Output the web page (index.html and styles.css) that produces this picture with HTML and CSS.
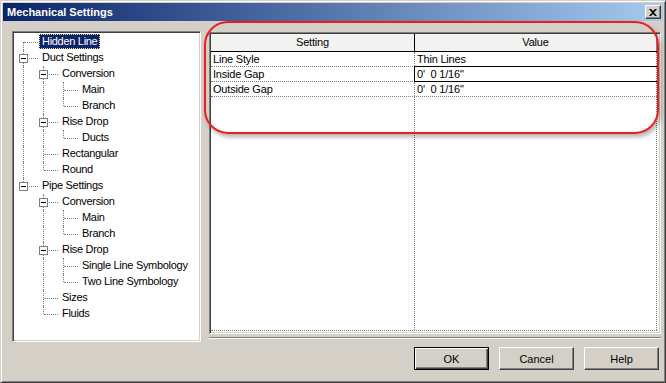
FILE: index.html
```html
<!DOCTYPE html>
<html lang="en">
<head>
    <meta charset="UTF-8">
    <meta name="viewport" content="width=device-width, initial-scale=1.0">
    <title>Mechanical Settings</title>
    <link rel="stylesheet" href="styles.css">
</head>
<body>
    <div class="dialog">
        <div class="titlebar">
            <span class="title">Mechanical Settings</span>
            <span class="close-btn">
                <svg width="8" height="7" viewBox="0 0 8 7"><path d="M0 0h2l2 2 2-2h2L5 3.5 8 7H6L4 5 2 7H0l3-3.5z" fill="#000"/></svg>
            </span>
        </div>

        <div class="main">
            <!-- tree on the left -->
            <div class="tree">
                <div class="row"><span class="conn f"></span><span class="label selected">Hidden Line</span></div>
                <div class="row"><span class="conn t"><i class="box"></i></span><span class="label">Duct Settings</span></div>
                <div class="row"><span class="guide on"></span><span class="conn t"><i class="box"></i></span><span class="label">Conversion</span></div>
                <div class="row"><span class="guide on"></span><span class="guide on"></span><span class="conn t"></span><span class="label">Main</span></div>
                <div class="row"><span class="guide on"></span><span class="guide on"></span><span class="conn l"></span><span class="label">Branch</span></div>
                <div class="row"><span class="guide on"></span><span class="conn t"><i class="box"></i></span><span class="label">Rise Drop</span></div>
                <div class="row"><span class="guide on"></span><span class="guide on"></span><span class="conn l"></span><span class="label">Ducts</span></div>
                <div class="row"><span class="guide on"></span><span class="conn t"></span><span class="label">Rectangular</span></div>
                <div class="row"><span class="guide on"></span><span class="conn l"></span><span class="label">Round</span></div>
                <div class="row"><span class="conn l"><i class="box"></i></span><span class="label">Pipe Settings</span></div>
                <div class="row"><span class="guide"></span><span class="conn t"><i class="box"></i></span><span class="label">Conversion</span></div>
                <div class="row"><span class="guide"></span><span class="guide on"></span><span class="conn t"></span><span class="label">Main</span></div>
                <div class="row"><span class="guide"></span><span class="guide on"></span><span class="conn l"></span><span class="label">Branch</span></div>
                <div class="row"><span class="guide"></span><span class="conn t"><i class="box"></i></span><span class="label">Rise Drop</span></div>
                <div class="row"><span class="guide"></span><span class="guide on"></span><span class="conn t"></span><span class="label">Single Line Symbology</span></div>
                <div class="row"><span class="guide"></span><span class="guide on"></span><span class="conn l"></span><span class="label">Two Line Symbology</span></div>
                <div class="row"><span class="guide"></span><span class="conn t"></span><span class="label">Sizes</span></div>
                <div class="row"><span class="guide"></span><span class="conn l"></span><span class="label">Fluids</span></div>
            </div>

            <div class="right">
                <!-- settings grid -->
                <div class="grid">
                    <div class="grid-head">
                        <div class="cell name">Setting</div>
                        <div class="cell value">Value</div>
                    </div>
                    <div class="grid-body">
                        <div class="grid-row">
                            <div class="cell name">Line Style</div>
                            <div class="cell value">Thin Lines</div>
                        </div>
                        <div class="grid-row">
                            <div class="cell name">Inside Gap</div>
                            <div class="cell value editing">0'&nbsp; 0 1/16"</div>
                        </div>
                        <div class="grid-row">
                            <div class="cell name">Outside Gap</div>
                            <div class="cell value">0'&nbsp; 0 1/16"</div>
                        </div>
                        <div class="grid-row filler">
                            <div class="cell name"></div>
                            <div class="cell value"></div>
                        </div>
                    </div>
                </div>
                <div class="sep"></div>

                <div class="buttons">
                    <button class="btn default">OK</button>
                    <button class="btn">Cancel</button>
                    <button class="btn">Help</button>
                </div>
            </div>
        </div>

        <!-- red annotation drawn over the grid -->
        <div class="callout"></div>
    </div>
</body>
</html>
```

FILE: styles.css
```css
body {
    margin: 0;
    font-family: "Liberation Sans", Arial, sans-serif;
    font-size: 11px;
    color: #000;
    background-color: #d4d0c8;
}

.dialog {
    position: relative;
    width: 666px;
    height: 383px;
    box-sizing: border-box;
    border: 1px solid;
    border-color: #d4d0c8 #404040 #404040 #d4d0c8;
    box-shadow: inset 1px 1px #fff, inset -1px -1px #808080;
    padding: 2px;
    background-color: #d4d0c8;
}

/* title bar */
.titlebar {
    height: 18px;
    display: flex;
    align-items: center;
    justify-content: space-between;
    padding: 0 2px 0 4px;
    background: linear-gradient(to right, #0a246a, #a6caf0);
}

.title {
    color: #fff;
    font-weight: bold;
    font-size: 11px;
    line-height: 18px;
}

.close-btn {
    width: 16px;
    height: 14px;
    box-sizing: border-box;
    display: flex;
    align-items: center;
    justify-content: center;
    background-color: #d4d0c8;
    border: 1px solid;
    border-color: #fff #404040 #404040 #fff;
    box-shadow: inset -1px -1px #808080;
}

.main {
    display: flex;
    gap: 8px;
    padding: 10px 0 0 9px;
}

/* tree */
.tree {
    width: 189px;
    height: 311px;
    box-sizing: border-box;
    border: 1px solid;
    border-color: #808080 #fff #fff #808080;
    box-shadow: inset 1px 1px #404040, inset -1px -1px #d4d0c8;
    padding: 2px 0 0 1px;
    background-color: #fff;
}

.row {
    display: flex;
    height: 16px;
}

.guide {
    position: relative;
    width: 20px;
    flex: none;
}

.guide.on::before {
    content: "";
    position: absolute;
    left: 9px;
    top: 0;
    bottom: 0;
    border-left: 1px dotted #808080;
}

.conn {
    position: relative;
    width: 25px;
    flex: none;
}

.conn::before {
    content: "";
    position: absolute;
    left: 9px;
    border-left: 1px dotted #808080;
}

.conn.t::before { top: 0; bottom: 0; }
.conn.l::before { top: 0; height: 8px; }
.conn.f::before { top: 8px; bottom: 0; }

.conn::after {
    content: "";
    position: absolute;
    left: 10px;
    top: 8px;
    width: 14px;
    border-top: 1px dotted #808080;
}

.box {
    position: absolute;
    left: 5px;
    top: 4px;
    width: 9px;
    height: 9px;
    box-sizing: border-box;
    border: 1px solid #808080;
    background-color: #fff;
    z-index: 1;
}

.box::after {
    content: "";
    position: absolute;
    left: 1px;
    top: 3px;
    width: 5px;
    height: 1px;
    background-color: #000;
}

.label {
    height: 15px;
    line-height: 15px;
    padding: 0 3px;
    letter-spacing: -0.3px;
    white-space: nowrap;
}

.label.selected {
    background-color: #0a246a;
    color: #fff;
    outline: 1px dotted #e8e4a0;
    outline-offset: -1px;
}

/* right side */
.right {
    display: flex;
    flex-direction: column;
    width: 452px;
    padding-top: 1px;
}

.grid {
    height: 302px;
    box-sizing: border-box;
    border: 1px solid;
    border-color: #808080 #fff #fff #808080;
    box-shadow: inset 1px 1px #404040, inset -1px -1px #d4d0c8;
    padding: 1px 2px 1px 1px;
    background-color: #fff;
    display: flex;
    flex-direction: column;
}

.grid-head {
    display: flex;
    height: 17px;
    border-bottom: 1px solid #000;
    background-color: #f2f2f0;
}

.grid-head .cell {
    text-align: center;
    line-height: 17px;
    border-right: 1px solid #000;
}

.grid-head .cell.value {
    border-right-color: #808080;
}

.cell {
    box-sizing: border-box;
    padding: 0 2px;
    letter-spacing: -0.2px;
    white-space: nowrap;
}

.cell.name {
    width: 204px;
}

.cell.value {
    width: 242px;
}

.grid-body {
    flex: 1;
    display: flex;
    flex-direction: column;
    padding-bottom: 1px;
}

.grid-row {
    display: flex;
    height: 15px;
    border-bottom: 1px dotted #808080;
    box-sizing: border-box;
    width: 446px;
}

.grid-row .cell {
    line-height: 14px;
    border-right: 1px dotted #808080;
}

.grid-row .cell.editing {
    outline: 1px solid #000;
    outline-offset: 0;
}

.grid-row.filler {
    flex: 1;
}

.sep {
    margin-top: 3px;
    border-top: 1px solid #808080;
    border-bottom: 1px solid #fff;
}

.buttons {
    display: flex;
    justify-content: flex-end;
    gap: 10px;
    padding: 8px 2px 0 0;
}

.btn {
    width: 75px;
    height: 23px;
    box-sizing: border-box;
    font-family: "Liberation Sans", Arial, sans-serif;
    font-size: 11px;
    color: #000;
    background-color: #d4d0c8;
    border: 1px solid;
    border-color: #fff #404040 #404040 #fff;
    box-shadow: inset -1px -1px #808080;
    padding: 0;
}

.btn.default {
    border-color: #000;
    box-shadow: inset 1px 1px #fff, inset -1px -1px #404040, inset -2px -2px #808080;
}

/* red annotation */
.callout {
    position: absolute;
    left: 203px;
    top: 20px;
    width: 455px;
    height: 113px;
    box-sizing: border-box;
    border: 2px solid #ee1c1c;
    border-radius: 24px;
    box-shadow: 2px 3px 4px rgba(0, 0, 0, 0.3);
    pointer-events: none;
}
```
